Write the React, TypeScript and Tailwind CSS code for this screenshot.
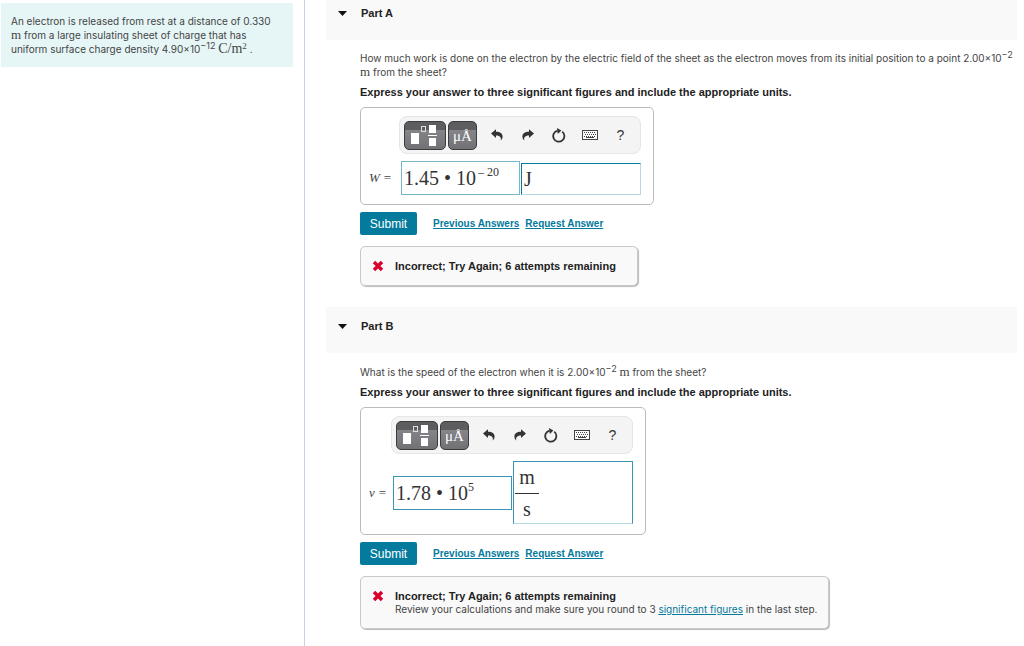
import { useId, useState } from "react";
import type { ReactNode } from "react";

const serif = "font-['Liberation_Serif',serif]";
const prose = "font-['Inter','Liberation_Sans',sans-serif] text-[10px]";

function Sup({ children }: { children: ReactNode }) {
  return <sup className="relative -top-1 align-baseline text-[9px] leading-none">{children}</sup>;
}

function Unit({ children }: { children: ReactNode }) {
  return <span className="font-['Liberation_Serif',serif] text-[13px] leading-none">{children}</span>;
}

function TemplatesIcon() {
  return (
    <svg viewBox="0 0 40 27" className="h-[27px] w-10" aria-hidden="true">
      <rect x="6" y="11" width="8" height="11" fill="#fff" />
      <rect x="16.5" y="4.500" width="4" height="5" fill="none" stroke="#ddd" />
      <rect x="24" y="3" width="7" height="8" fill="#fff" />
      <rect x="23" y="13" width="9" height="1" fill="#fff" />
      <rect x="24" y="16" width="7" height="8" fill="#fff" />
    </svg>
  );
}

function UndoIcon() {
  return (
    <svg viewBox="0 0 12 12" className="h-3 w-3" fill="#333" aria-hidden="true">
      <path d="M0 4.600 5 .3v2.500c4.300 0 6.600 2 6.600 4.800 0 1.800-.8 3.200-2.200 4.200.6-1.300.7-2.600 0-3.600C8.700 7.100 7.200 6.600 5 6.600V9z" />
    </svg>
  );
}

function RedoIcon() {
  return (
    <svg viewBox="0 0 12 12" className="h-3 w-3" fill="#333" aria-hidden="true">
      <path d="M12 4.600 7 .3v2.500C2.700 2.800.4 4.800.4 7.600c0 1.800.8 3.200 2.200 4.200-.6-1.300-.7-2.600 0-3.600.7-1.100 2.200-1.600 4.400-1.600V9z" />
    </svg>
  );
}

function ResetIcon() {
  return (
    <svg viewBox="0 0 14 15" className="h-[15px] w-3.5" aria-hidden="true">
      <path d="M10.200 3.600a5.600 5.600 0 1 1-4.600-1" fill="none" stroke="#333" strokeWidth="1.800" />
      <path d="M5 0 9.400 2.600 5.800 6z" fill="#333" />
    </svg>
  );
}

function KeyboardIcon() {
  return (
    <svg viewBox="0 0 16 10" className="h-2.5 w-4" aria-hidden="true">
      <rect x=".5" y=".5" width="15" height="9" fill="#fafafa" stroke="#444" />
      <path d="M2 2.500h12M3 4.500h11M2 6.500h12" stroke="#444" strokeDasharray="1 1" />
      <path d="M4 7.500h8" stroke="#444" />
    </svg>
  );
}

function Toolbar() {
  const dark =
    "flex h-[29px] items-center justify-center rounded-[5px] border border-[#3c3c3e] bg-[linear-gradient(#5d5d5f_0_28%,#85858b_28%,#717175)]";
  const plain = "flex h-7 w-[31px] items-center justify-center";
  return (
    <div className="flex h-[38px] w-[242px] items-center rounded-lg border border-[#e6e6e6] bg-[#f4f4f4] pl-1">
      <button type="button" aria-label="Templates" className={`${dark} w-[42px]`}>
        <TemplatesIcon />
      </button>
      <button
        type="button"
        aria-label="Symbols"
        className={`${dark} ml-0.5 mr-1 w-[29px] pt-0.5 font-['Liberation_Serif',serif] text-[15px] leading-none text-white`}
      >
        μÅ
      </button>
      <button type="button" aria-label="Undo" className={plain}>
        <UndoIcon />
      </button>
      <button type="button" aria-label="Redo" className={plain}>
        <RedoIcon />
      </button>
      <button type="button" aria-label="Reset" className={plain}>
        <ResetIcon />
      </button>
      <button type="button" aria-label="Keyboard shortcuts" className={plain}>
        <KeyboardIcon />
      </button>
      <button type="button" aria-label="Help" className={`${plain} text-[14px] text-[#333]`}>
        ?
      </button>
    </div>
  );
}

function Slot({ id, label, initial, className }: { id?: string; label: string; initial: string; className: string }) {
  const [value, setValue] = useState(initial);
  return (
    <input
      id={id}
      aria-label={label}
      value={value}
      onChange={(e) => setValue(e.target.value)}
      className={`min-w-0 bg-transparent text-[#333] outline-none ${className}`}
    />
  );
}

function Submission({ feedback }: { feedback: ReactNode }) {
  return (
    <>
      <div className="mt-[7px] flex items-center text-[10px] font-bold text-[#047a9c]">
        <button type="submit" className="h-[23px] w-[57px] rounded-xs bg-[#047a9c] text-[12px] font-normal text-white">
          Submit
        </button>
        <a href="#previous" className="ml-4 underline">
          Previous Answers
        </a>
        <a href="#request" className="ml-1.5 underline">
          Request Answer
        </a>
      </div>
      <div
        role="status"
        className="mt-[11px] flex w-fit min-w-[278px] items-start rounded-[5px] border border-[#c8c8c8] bg-[#f9f9f9] px-[11px] pt-[13px] pb-3 shadow-[1px_1px_1px_#bbb]"
      >
        <svg viewBox="0 0 12 12" className="mr-[11px] h-3 w-3" aria-hidden="true">
          <path d="m2 2 8 8M10 2l-8 8" stroke="#d9002b" strokeWidth="3.400" />
        </svg>
        <div className="leading-[13px]">{feedback}</div>
      </div>
    </>
  );
}

function Part({ title, question, children }: { title: string; question: ReactNode; children: ReactNode }) {
  const [open, setOpen] = useState(true);
  return (
    <section>
      <h2 className="h-[46px] bg-[#f9f9f9] pt-3 pl-3 text-[11px] leading-[14px] font-bold text-[#222]">
        <button type="button" aria-expanded={open} onClick={() => setOpen(!open)} className="flex items-center gap-3.5">
          <svg viewBox="0 0 9 5" className="h-[5px] w-[9px]" aria-hidden="true">
            <path d="M0 0h9L4.500 5z" fill="#111" />
          </svg>
          {title}
        </button>
      </h2>
      {open && (
        <form className="pt-3 pb-[21px] pl-[34px]" onSubmit={(e) => e.preventDefault()}>
          <p className={`leading-[13px] ${prose}`}>{question}</p>
          <p className="mt-[7px] leading-[13px] font-bold text-[#222]">
            Express your answer to three significant figures and include the appropriate units.
          </p>
          {children}
        </form>
      )}
    </section>
  );
}

export default function App() {
  const work = useId();
  const speed = useId();
  return (
    <div className="flex h-screen overflow-hidden bg-white font-['Liberation_Sans',Arial,sans-serif] text-[11px] text-[#444]">
      <aside className="w-[305px] shrink-0 border-r border-[#c7d3e3] pt-[3px] pr-[11px] pl-px">
        <p className={`bg-[#e6f6f7] pt-[11px] pr-4 pb-[11px] pl-2.5 leading-[14px] ${prose}`}>
          An electron is released from rest at a distance of 0.330 <Unit>m</Unit> from a large insulating sheet of
          charge that has uniform surface charge density 4.90×10<Sup>−12</Sup>{" "}
          <span className={`${serif} text-[14px] leading-none`}>
            C/m<Sup>2</Sup>
          </span>{" "}
          .
        </p>
      </aside>
      <main className="-mt-1.5 min-w-0 flex-1 pr-[7px] pl-[21px]">
        <Part
          title="Part A"
          question={
            <>
              How much work is done on the electron by the electric field of the sheet as the electron moves from its
              initial position to a point 2.00×10<Sup>−2</Sup> <Unit>m</Unit> from the sheet?
            </>
          }
        >
          <div className="mt-2 w-fit rounded-[5px] border border-[#bbb] pt-2 pr-3 pb-[9px] pl-2">
            <div className="flex justify-end">
              <Toolbar />
            </div>
            <div className="mt-[7px] flex items-end">
              <label htmlFor={work} className="flex w-8 gap-1 self-center font-['Liberation_Serif',serif] text-[13px]">
                <i>W</i> =
              </label>
              <div className="flex h-[34px] w-[119px] items-center border border-[#7ab5c8] pl-0.5">
                <Slot
                  id={work}
                  label="W value"
                  initial="1.45 • 10"
                  className="w-[74px] font-['Liberation_Serif',serif] text-[20px]"
                />
                <Slot
                  label="W exponent"
                  initial="– 20"
                  className="mb-3 w-9 font-['Liberation_Serif',serif] text-[12px]"
                />
              </div>
              <div className="ml-px flex h-8 w-[120px] items-center border border-t-[#047a9c] border-r-[#b5d8e2] border-b-[#b5d8e2] border-l-[#047a9c] pl-0.5">
                <Slot label="W units" initial="J" className="w-full font-['Liberation_Serif',serif] text-[20px]" />
              </div>
            </div>
          </div>
          <Submission
            feedback={<strong className="text-[#222]">Incorrect; Try Again; 6 attempts remaining</strong>}
          />
        </Part>
        <Part
          title="Part B"
          question={
            <>
              What is the speed of the electron when it is 2.00×10<Sup>−2</Sup> <Unit>m</Unit> from the sheet?
            </>
          }
        >
          <div className="mt-2 w-fit rounded-[5px] border border-[#bbb] pt-2 pr-3 pb-2.5 pl-2">
            <div className="flex justify-end">
              <Toolbar />
            </div>
            <div className="mt-[7px] flex items-center">
              <label htmlFor={speed} className="flex w-6 gap-1 font-['Liberation_Serif',serif] text-[13px]">
                <i>v</i> =
              </label>
              <div className="flex h-[34px] w-[119px] items-center border border-[#3a93af] pl-0.5">
                <Slot
                  id={speed}
                  label="v value"
                  initial="1.78 • 10"
                  className="w-[72px] font-['Liberation_Serif',serif] text-[20px]"
                />
                <Slot
                  label="v exponent"
                  initial="5"
                  className="mb-3 w-9 font-['Liberation_Serif',serif] text-[12px]"
                />
              </div>
              <div className="ml-px flex h-[63px] w-[120px] flex-col items-start border border-[#3a93af] border-b-[#b5d8e2] pl-px">
                <Slot
                  label="v units numerator"
                  initial="m"
                  className="h-8 w-6 border-b border-[#333] text-center font-['Liberation_Serif',serif] text-[20px]"
                />
                <Slot
                  label="v units denominator"
                  initial="s"
                  className="h-[29px] w-6 text-center font-['Liberation_Serif',serif] text-[20px]"
                />
              </div>
            </div>
          </div>
          <Submission
            feedback={
              <>
                <strong className="block text-[#222]">Incorrect; Try Again; 6 attempts remaining</strong>
                <p className={prose}>
                  Review your calculations and make sure you round to 3{" "}
                  <a href="#figures" className="text-[#047a9c] underline">
                    significant figures
                  </a>{" "}
                  in the last step.
                </p>
              </>
            }
          />
        </Part>
      </main>
    </div>
  );
}
